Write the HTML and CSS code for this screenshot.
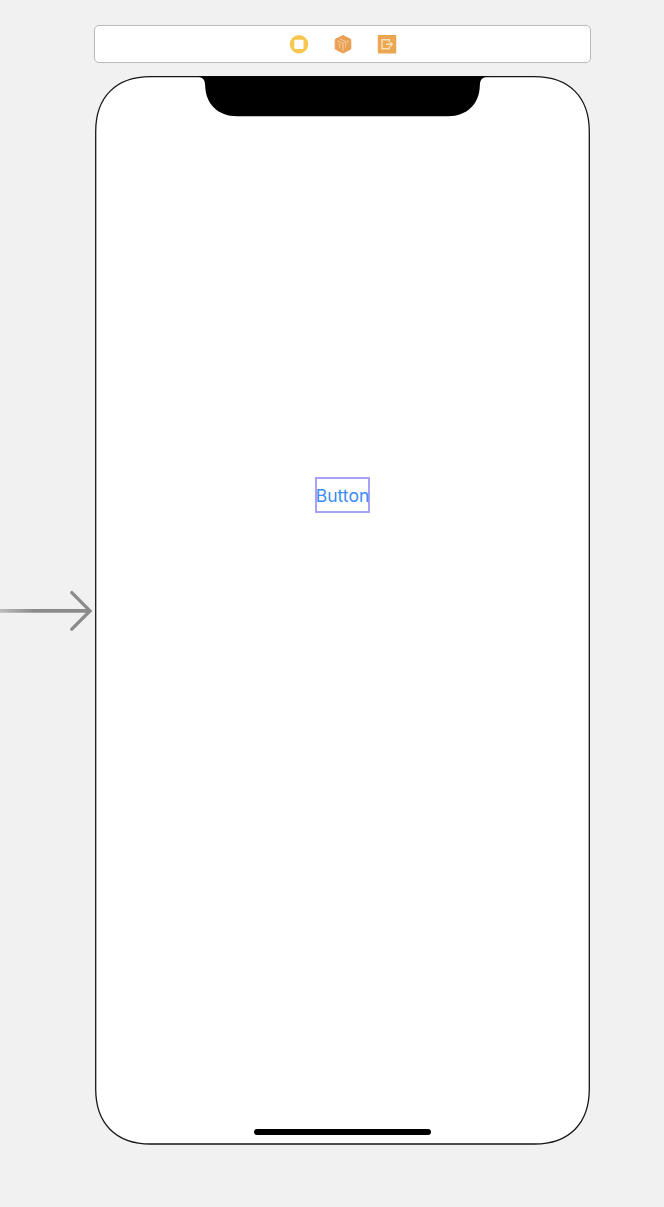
FILE: index.html
```html
<!DOCTYPE html>
<html lang="en">
<head>
<meta charset="utf-8">
<title>Storyboard</title>
<link rel="stylesheet" href="styles.css">
</head>
<body>
<main class="canvas">
  <header class="scene-dock">
    <svg class="dock-icon" viewBox="0 0 20 20" aria-label="View Controller">
      <circle cx="10" cy="10.3" r="9.2" fill="#f6c74f"/>
      <rect x="5.3" y="5.7" width="9.3" height="9.3" rx="1.2" fill="#fff"/>
    </svg>
    <svg class="dock-icon" viewBox="0 0 20 20" aria-label="First Responder">
      <path d="M10 1.5 17.8 5.4v9.6L10 19 2.2 15V5.4Z" fill="#e9a052" stroke="#e9a052" stroke-linejoin="round"/>
      <path d="M4.2 6.7 10 9.2l5.8-2.5M10 9.2v7.6" fill="none" stroke="#f5c897" stroke-width="1.2"/>
      <path d="M6.8 4.9 13 7.6M6.6 10v4M5.3 9.6l2.6 1.1M12.6 13.5v-3.2l2-.9" fill="none" stroke="#f5c897" stroke-width="1"/>
    </svg>
    <svg class="dock-icon" viewBox="0 0 20 20" aria-label="Exit">
      <rect x=".8" y="1.1" width="18.4" height="18.4" rx=".5" fill="#eba651"/>
      <path d="M12.3 8V5.8H5v9h7.3v-2.2M9 10.3h6M13.2 8.2l2.1 2.1-2.1 2.1" fill="none" stroke="#fbdfb8" stroke-width="1.4"/>
    </svg>
  </header>
  <div class="scene">
    <svg class="entry-arrow" viewBox="0 0 95 44" aria-hidden="true">
      <defs>
        <linearGradient id="fade" gradientUnits="userSpaceOnUse" x1="0" y1="0" x2="34" y2="0">
          <stop offset="0" stop-color="#bdbdbd"/>
          <stop offset="1" stop-color="#8b8b8b"/>
        </linearGradient>
      </defs>
      <path d="M0 20.1H89v3.6H0Z" fill="url(#fade)"/>
      <path d="M71.8 3.6 90 21.9 71.8 40.2" fill="none" stroke="#8b8b8b" stroke-width="3.3" stroke-linecap="round"/>
    </svg>
    <section class="phone">
      <svg class="phone-frame" viewBox="0 0 495 1069" aria-hidden="true">
        <path d="M55.5 .7H439.5C474 .7 494.3 21 494.3 55.5V1013C494.3 1047.5 474 1068 439.5 1068H55.5C21 1068 .7 1047.5 .7 1013V55.5C.7 21 21 .7 55.5 .7Z" fill="#fff" stroke="#161616" stroke-width="1.3"/>
        <path d="M101 .2C108 1.2 110 3 110.2 10C110.7 28 123 40.2 142 40.2H353C372 40.2 384.3 28 384.8 10C385 3 387 1.2 394 .2Z" fill="#000"/>
      </svg>
      <div class="screen">
        <button class="ui-button" type="button">Button</button>
        <div class="home-indicator"></div>
      </div>
    </section>
  </div>
</main>
</body>
</html>
```
FILE: styles.css
```css
* {
  box-sizing: border-box;
}

body {
  margin: 0;
  background: #f1f1f1;
  font-family: Inter, "Liberation Sans", sans-serif;
}

.canvas {
  height: 1207px;
  padding-top: 25px;
  overflow: hidden;
}

.scene-dock {
  display: flex;
  align-items: center;
  justify-content: center;
  gap: 24px;
  width: 497px;
  height: 38px;
  margin-left: 94px;
  padding-left: 1px;
  background: #fff;
  border: 1px solid #b9b9b9;
  border-radius: 5px;
}

.dock-icon {
  width: 20px;
  height: 20px;
}

.scene {
  display: flex;
  align-items: center;
  margin-top: 13px;
}

.entry-arrow {
  width: 95px;
  height: 44px;
  margin-top: 1px;
}

.phone {
  display: grid;
  width: 495px;
  height: 1069px;
}

.phone-frame,
.screen {
  grid-area: 1 / 1;
  width: 495px;
  height: 1069px;
}

.screen {
  display: flex;
  flex-direction: column;
  align-items: center;
  justify-content: space-between;
  padding: 401px 0 10px;
}

.ui-button {
  display: flex;
  align-items: center;
  justify-content: center;
  width: 55px;
  height: 36px;
  padding: 1px 0 0;
  border: 2px solid #a5a2f4;
  background: none;
  color: #3b8cf3;
  font: 400 17.5px/20px Inter, "Liberation Sans", sans-serif;
  letter-spacing: 0;
  white-space: nowrap;
}

.home-indicator {
  width: 177px;
  height: 6px;
  border-radius: 3px;
  background: #000;
}
```
